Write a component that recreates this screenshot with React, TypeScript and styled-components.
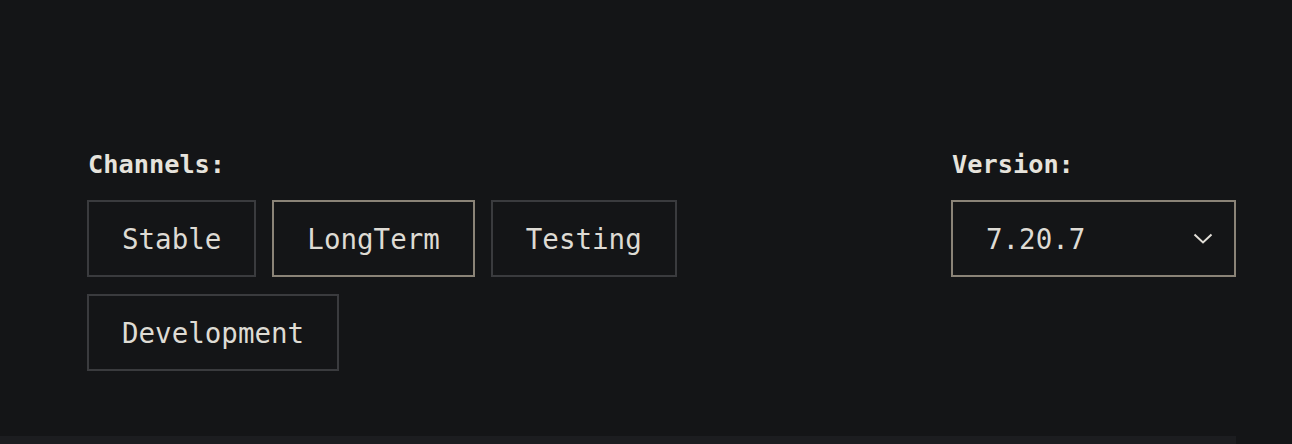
import {useState} from "react";
import styled, {createGlobalStyle} from "styled-components";

const GlobalStyle = createGlobalStyle`
    html, body {
        margin: 0;
        padding: 0;
        background: #141517;
    }
`

const channels = ['Stable', 'LongTerm', 'Testing', 'Development']

export default function App() {
    const [channel, setChannel] = useState('LongTerm')

    return <Page>
        <GlobalStyle />
        <Section>
            <Field>
                <Label>Channels:</Label>
                <ChannelList>
                    {channels.map(c =>
                        <ChannelButton key={c} $active={c === channel} onClick={() => setChannel(c)}>
                            {c}
                        </ChannelButton>)}
                </ChannelList>
            </Field>
            <Field>
                <Label>Version:</Label>
                <Select>
                    <span>7.20.7</span>
                    <svg width="20" height="12" viewBox="0 0 20 12" fill="none">
                        <path d="M1.5 1.5 L10 9.5 L18.5 1.5" stroke="#e2dfd8" strokeWidth="2" />
                    </svg>
                </Select>
            </Field>
        </Section>
        <Band />
    </Page>
}

const Page = styled.div`
    width: 1292px;
    height: 444px;
    overflow: hidden;
    background: #141517;
    font-family: "DejaVu Sans Mono", "Liberation Mono", monospace;
`

const Section = styled.div`
    display: flex;
    justify-content: space-between;
    align-items: flex-start;
    width: 1236px;
    box-sizing: border-box;
    height: 436px;
    padding: 150px 0 0 87px;
`

const Field = styled.div`
    display: flex;
    flex-direction: column;
    gap: 20px;
`

const Label = styled.div`
    padding-left: 1px;
    font-size: 25.3px;
    line-height: 30px;
    font-weight: 700;
    color: #e6e3dc;
`

const ChannelList = styled.div`
    display: flex;
    flex-wrap: wrap;
    gap: 17px 16px;
    width: 620px;
`

const ChannelButton = styled.button<{ $active?: boolean }>`
    box-sizing: border-box;
    height: 77px;
    padding: 0 33px;
    background: transparent;
    border: 2px solid ${p => p.$active ? '#8a8377' : '#3a3b3e'};
    font-family: inherit;
    font-size: 27.5px;
    color: #dedbd4;
    cursor: pointer;
`

const Select = styled.div`
    box-sizing: border-box;
    display: flex;
    align-items: center;
    justify-content: space-between;
    width: 285px;
    height: 77px;
    padding: 0 21px 0 33px;
    border: 2px solid #8a8377;
    font-size: 27.5px;
    color: #dedbd4;
`

const Band = styled.div`
    width: 1236px;
    height: 8px;
    background: #1c1d20;
`
